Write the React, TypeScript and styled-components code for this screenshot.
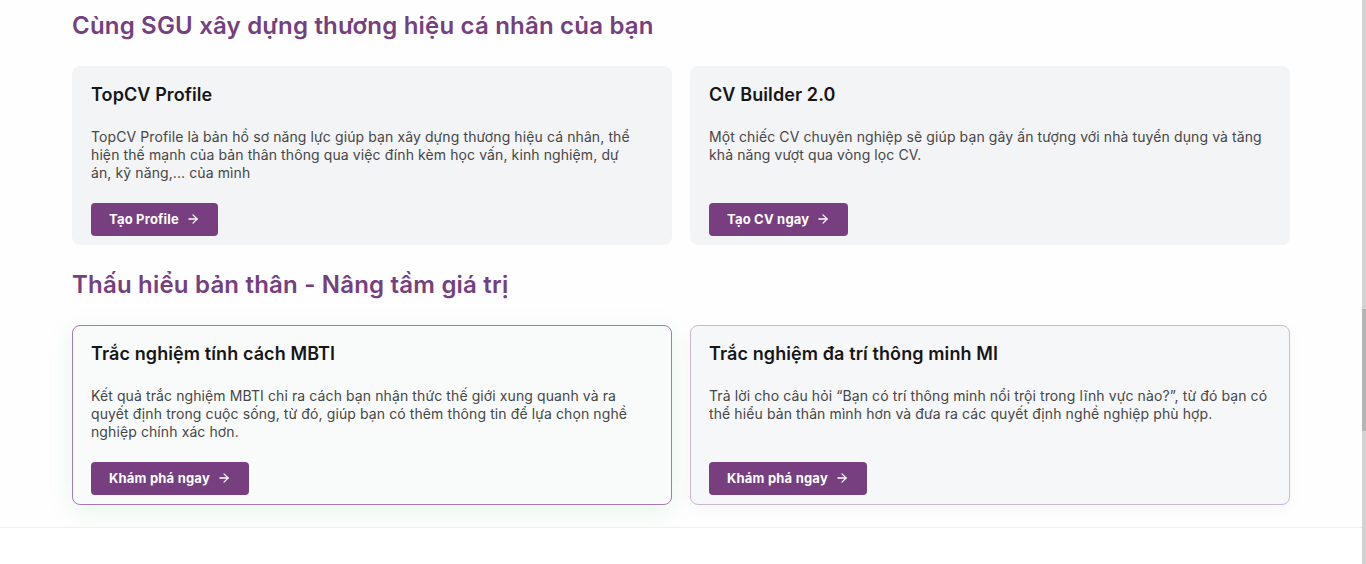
import React from "react";
import styled, { createGlobalStyle } from "styled-components";
import { ArrowRight } from "lucide-react";

const GlobalStyle = createGlobalStyle`
  html, body {
    margin: 0;
    padding: 0;
    background: #ffffff;
    font-family: Inter, "Noto Sans", sans-serif;
  }
  * { box-sizing: border-box; }
`;

type CardItem = {
  title: string;
  desc: string;
  button: string;
};

// line breaks kept as in the design so wrapping doesn't depend on the font
const brandCards: CardItem[] = [
  {
    title: "TopCV Profile",
    desc: "TopCV Profile là bản hồ sơ năng lực giúp bạn xây dựng thương hiệu cá nhân, thể\nhiện thế mạnh của bản thân thông qua việc đính kèm học vấn, kinh nghiệm, dự\nán, kỹ năng,... của mình",
    button: "Tạo Profile",
  },
  {
    title: "CV Builder 2.0",
    desc: "Một chiếc CV chuyên nghiệp sẽ giúp bạn gây ấn tượng với nhà tuyển dụng và tăng\nkhả năng vượt qua vòng lọc CV.",
    button: "Tạo CV ngay",
  },
];

const testCards: CardItem[] = [
  {
    title: "Trắc nghiệm tính cách MBTI",
    desc: "Kết quả trắc nghiệm MBTI chỉ ra cách bạn nhận thức thế giới xung quanh và ra\nquyết định trong cuộc sống, từ đó, giúp bạn có thêm thông tin để lựa chọn nghề\nnghiệp chính xác hơn.",
    button: "Khám phá ngay",
  },
  {
    title: "Trắc nghiệm đa trí thông minh MI",
    desc: "Trả lời cho câu hỏi “Bạn có trí thông minh nổi trội trong lĩnh vực nào?”, từ đó bạn có\nthể hiểu bản thân mình hơn và đưa ra các quyết định nghề nghiệp phù hợp.",
    button: "Khám phá ngay",
  },
];

export default function App() {
  return (
    <>
      <GlobalStyle />
      <Page>
        <Main>
          <Section>
            <Container>
              <Heading>Cùng SGU xây dựng thương hiệu cá nhân của bạn</Heading>
              <CardGrid>
                {brandCards.map((c) => (
                  <Card key={c.title} variant="plain">
                    <CardTitle>{c.title}</CardTitle>
                    <CardDesc>{c.desc}</CardDesc>
                    <ActionButton>
                      {c.button}
                      <ArrowRight size={14} strokeWidth={2.2} />
                    </ActionButton>
                  </Card>
                ))}
              </CardGrid>
              <Heading>Thấu hiểu bản thân - Nâng tầm giá trị</Heading>
              <CardGrid>
                {testCards.map((c, i) => (
                  <Card key={c.title} variant={i === 0 ? "active" : "outlined"}>
                    <CardTitle>{c.title}</CardTitle>
                    <CardDesc>{c.desc}</CardDesc>
                    <ActionButton>
                      {c.button}
                      <ArrowRight size={14} strokeWidth={2.2} />
                    </ActionButton>
                  </Card>
                ))}
              </CardGrid>
            </Container>
          </Section>
          <Below />
        </Main>
        <ScrollTrack>
          <ScrollThumb />
        </ScrollTrack>
      </Page>
    </>
  );
}

const Page = styled.div`
  display: flex;
  height: 564px;
  overflow: hidden;
`;

const Main = styled.div`
  flex: 1;
  display: flex;
  flex-direction: column;
`;

const Section = styled.section`
  background: #fefefe;
  padding: 10px 0 22px;
  border-bottom: 1px solid #f0f0f0;
  box-shadow: 0 1px 2px rgba(0, 0, 0, 0.03);
`;

const Below = styled.div`
  flex: 1;
  background: #ffffff;
`;

const Container = styled.div`
  width: 1218px;
  margin: 0 auto;
  display: flex;
  flex-direction: column;
  gap: 24px;
`;

const Heading = styled.h2`
  margin: 0;
  font-size: 24px;
  line-height: 32px;
  font-weight: 600;
  letter-spacing: 0.2px;
  color: #74407f;
`;

const CardGrid = styled.div`
  display: grid;
  grid-template-columns: 1fr 1fr;
  gap: 18px;
`;

const Card = styled.div<{ variant: "plain" | "outlined" | "active" }>`
  display: flex;
  flex-direction: column;
  height: ${(p) => (p.variant === "plain" ? "179px" : "180px")};
  padding: ${(p) => (p.variant === "plain" ? "17px 19px 9px" : "16px 18px 9px")};
  border-radius: 8px;
  background: ${(p) =>
    p.variant === "plain" ? "#f3f4f6" : p.variant === "active" ? "#f9fbfa" : "#f6f7f9"};
  border: ${(p) =>
    p.variant === "plain"
      ? "none"
      : p.variant === "active"
      ? "1px solid #a47bad"
      : "1px solid #cbb8d1"};
  box-shadow: ${(p) =>
    p.variant === "active"
      ? "0 6px 24px rgba(60, 170, 100, 0.12)"
      : p.variant === "outlined"
      ? "0 4px 14px rgba(0, 0, 0, 0.04)"
      : "none"};
`;

const CardTitle = styled.h3`
  margin: 0;
  font-size: 18px;
  line-height: 24px;
  font-weight: 600;
  letter-spacing: 0.1px;
  color: #161616;
`;

const CardDesc = styled.p`
  margin: 21px 0 0;
  font-size: 14px;
  line-height: 18px;
  letter-spacing: 0.1px;
  white-space: pre-line;
  color: #464646;
`;

const ActionButton = styled.button`
  margin-top: auto;
  align-self: flex-start;
  display: inline-flex;
  align-items: center;
  gap: 7px;
  height: 33px;
  padding: 0 18px 1px;
  border: none;
  border-radius: 4px;
  background: #773f80;
  color: #ffffff;
  font-family: inherit;
  font-size: 13px;
  font-weight: 700;
  letter-spacing: 0.2px;
  cursor: pointer;
`;

const ScrollTrack = styled.div`
  width: 4px;
  background: #d2d2d2;
  display: flex;
  flex-direction: column;
`;

const ScrollThumb = styled.div`
  margin-top: 309px;
  height: 122px;
  background: #b4b4b4;
`;
